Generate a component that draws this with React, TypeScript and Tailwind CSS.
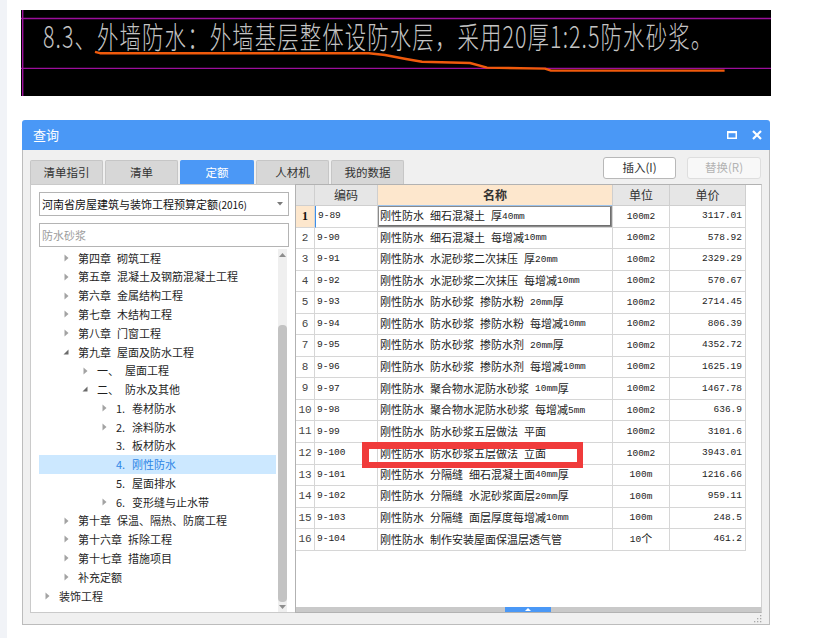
import React from "react";

const CJK = "font-['Noto_Sans_CJK_SC','Noto_Sans',sans-serif]";
const MONO = "font-['Liberation_Mono','DejaVu_Sans_Mono',monospace]";

function Sp({ t }: { t: string }) {
  const parts = t.split(" ");
  return (
    <>
      {parts.map((p, i) => (
        <React.Fragment key={i}>
          {i > 0 && <span className="inline-block w-[6px]" />}
          {p}
        </React.Fragment>
      ))}
    </>
  );
}

function NameText({ t }: { t: string }) {
  const runs = t.split(/([A-Za-z0-9.]+)/).filter((s) => s.length > 0);
  return (
    <>
      {runs.map((r, i) =>
        /^[A-Za-z0-9.]+$/.test(r) ? (
          <span key={i} className={`${MONO} text-[9.5px] relative -top-[1.5px]`}>
            {r}
          </span>
        ) : (
          <Sp key={i} t={r} />
        )
      )}
    </>
  );
}

type TNode = {
  lvl: number;
  arrow: "r" | "d" | null;
  pre?: string;
  preW?: number;
  text: string;
  sel?: boolean;
};

const tree: TNode[] = [
  { lvl: 1, arrow: "r", text: "第四章 砌筑工程" },
  { lvl: 1, arrow: "r", text: "第五章 混凝土及钢筋混凝土工程" },
  { lvl: 1, arrow: "r", text: "第六章 金属结构工程" },
  { lvl: 1, arrow: "r", text: "第七章 木结构工程" },
  { lvl: 1, arrow: "r", text: "第八章 门窗工程" },
  { lvl: 1, arrow: "d", text: "第九章 屋面及防水工程" },
  { lvl: 2, arrow: "r", pre: "一、", preW: 28, text: "屋面工程" },
  { lvl: 2, arrow: "d", pre: "二、", preW: 28, text: "防水及其他" },
  { lvl: 3, arrow: "r", pre: "1.", preW: 16, text: "卷材防水" },
  { lvl: 3, arrow: "r", pre: "2.", preW: 16, text: "涂料防水" },
  { lvl: 3, arrow: null, pre: "3.", preW: 16, text: "板材防水" },
  { lvl: 3, arrow: null, pre: "4.", preW: 16, text: "刚性防水", sel: true },
  { lvl: 3, arrow: null, pre: "5.", preW: 16, text: "屋面排水" },
  { lvl: 3, arrow: "r", pre: "6.", preW: 16, text: "变形缝与止水带" },
  { lvl: 1, arrow: "r", text: "第十章 保温、隔热、防腐工程" },
  { lvl: 1, arrow: "r", text: "第十六章 拆除工程" },
  { lvl: 1, arrow: "r", text: "第十七章 措施项目" },
  { lvl: 1, arrow: "r", text: "补充定额" },
  { lvl: 0, arrow: "r", text: "装饰工程" },
];

const rows: [string, string, string, string][] = [
  ["9-89", "刚性防水 细石混凝土 厚40mm", "100m2", "3117.01"],
  ["9-90", "刚性防水 细石混凝土 每增减10mm", "100m2", "578.92"],
  ["9-91", "刚性防水 水泥砂浆二次抹压 厚20mm", "100m2", "2329.29"],
  ["9-92", "刚性防水 水泥砂浆二次抹压 每增减10mm", "100m2", "570.67"],
  ["9-93", "刚性防水 防水砂浆 掺防水粉 20mm厚", "100m2", "2714.45"],
  ["9-94", "刚性防水 防水砂浆 掺防水粉 每增减10mm", "100m2", "806.39"],
  ["9-95", "刚性防水 防水砂浆 掺防水剂 20mm厚", "100m2", "4352.72"],
  ["9-96", "刚性防水 防水砂浆 掺防水剂 每增减10mm", "100m2", "1625.19"],
  ["9-97", "刚性防水 聚合物水泥防水砂浆 10mm厚", "100m2", "1467.78"],
  ["9-98", "刚性防水 聚合物水泥防水砂浆 每增减5mm", "100m2", "636.9"],
  ["9-99", "刚性防水 防水砂浆五层做法 平面", "100m2", "3101.6"],
  ["9-100", "刚性防水 防水砂浆五层做法 立面", "100m2", "3943.01"],
  ["9-101", "刚性防水 分隔缝 细石混凝土面40mm厚", "100m", "1216.66"],
  ["9-102", "刚性防水 分隔缝 水泥砂浆面层20mm厚", "100m", "959.11"],
  ["9-103", "刚性防水 分隔缝 面层厚度每增减10mm", "100m", "248.5"],
  ["9-104", "刚性防水 制作安装屋面保温层透气管", "10个", "461.2"],
];

function ArrowR() {
  return (
    <svg width="5" height="8" viewBox="0 0 5 8">
      <path d="M0.5 0.5 L4.5 4 L0.5 7.5 Z" fill="#a3a3a3" />
    </svg>
  );
}
function ArrowD() {
  return (
    <svg width="6" height="6" viewBox="0 0 6 6">
      <path d="M5.5 0.5 L5.5 5.5 L0.5 5.5 Z" fill="#6b6b6b" />
    </svg>
  );
}

function Tab({ label, w, active }: { label: string; w: string; active?: boolean }) {
  return (
    <div
      className={`${w} h-[24px] flex items-center justify-center text-[11.5px] rounded-t-[2px] border border-b-0 ${
        active
          ? "bg-[#4b98f6] border-[#4b98f6] text-white"
          : "bg-[#d7d7d7] border-[#c6c6c6] text-[#333]"
      }`}
    >
      {label}
    </div>
  );
}

export default function App() {
  return (
    <div className={`w-[838px] h-[638px] bg-white flex overflow-hidden ${CJK}`}>
      <div className="w-[7px] shrink-0 bg-[#f1f3f7]" />
      <div className="flex flex-col">
        {/* CAD banner */}
        <div className="relative ml-[14px] mt-[10px] h-[86px] w-[750px] bg-black">
          <svg className="absolute left-0 top-0" width="750" height="86" viewBox="0 0 750 86">
            <line x1="0" y1="8.5" x2="750" y2="8.5" stroke="#9c0f9c" strokeWidth="1.4" />
            <line x1="0" y1="58.4" x2="750" y2="58.4" stroke="#9c0f9c" strokeWidth="1.4" />
            <line x1="1.7" y1="0" x2="1.7" y2="86" stroke="#9c0f9c" strokeWidth="1.4" />
            <polyline
              points="74,41.8 79,43.2 348,43.2 364,45 385,49 401,51.8 449,53 466,57.6 524,58.6 530,60.6 703.6,60.6"
              fill="none"
              stroke="#f05a0c"
              strokeWidth="2.4"
              strokeLinejoin="round"
            />
          </svg>
          <div className="relative pl-[22px] pt-[10px] whitespace-nowrap">
            <span className="inline-block origin-left scale-x-[0.715] text-[30px] leading-[30px] text-[#c4c4c4] font-light tracking-[1.5px]">
              8.3、外墙防水：外墙基层整体设防水层，采用20厚1:2.5防水砂浆。
            </span>
          </div>
        </div>

        {/* Dialog */}
        <div className="ml-[15px] mt-[24px] w-[748px] flex flex-col">
          <div className="h-[30px] bg-[#4a98f6] rounded-t-[3px] flex items-center pl-[11px] pr-[8px] text-white text-[13px]">
            <span>查询</span>
            <div className="ml-auto flex items-center gap-[15px]">
              <svg width="10" height="8" viewBox="0 0 10 8">
                <rect x="0.75" y="1" width="8.5" height="6.25" fill="none" stroke="white" strokeWidth="1.5" />
                <rect x="0" y="0" width="10" height="2.2" fill="white" />
              </svg>
              <svg width="10" height="10" viewBox="0 0 10 10">
                <path d="M1 1 L9 9 M9 1 L1 9" stroke="white" strokeWidth="2.2" />
              </svg>
            </div>
          </div>
          <div className="h-[475px] bg-[#f0f0f0] border-x border-b border-[#bcbcbc] px-[7px] pt-[10px] flex flex-col">
            {/* tabs row */}
            <div className="h-[24px] flex">
              <div className="flex gap-[2px]">
                <Tab label="清单指引" w="w-[73px]" />
                <Tab label="清单" w="w-[73px]" />
                <Tab label="定额" w="w-[74px]" active />
                <Tab label="人材机" w="w-[73px]" />
                <Tab label="我的数据" w="w-[73px]" />
              </div>
              <div className="ml-auto mr-[1px] -mt-[3px] flex gap-[11px]">
                <div className="w-[73px] h-[22px] bg-white border border-[#b8b8b8] rounded-[3px] flex items-center justify-center text-[11.5px] text-[#333]">
                  插入(I)
                </div>
                <div className="w-[74px] h-[22px] bg-[#f8f8f8] border border-[#dedede] rounded-[3px] flex items-center justify-center text-[11.5px] text-[#b3b3b3]">
                  替换(R)
                </div>
              </div>
            </div>

            {/* panels */}
            <div className="h-[429px] flex">
              {/* left panel */}
              <div className="w-[265px] bg-white border-y border-l border-[#cacaca] pl-[8px] pt-[7px] flex flex-col">
                <div className="w-[250px] h-[24px] border border-[#b4b4b4] flex items-center pl-[2px] pr-[5px] text-[11px] text-[#111]">
                  <span className="whitespace-nowrap">
                    河南省房屋建筑与装饰工程预算定额<span className="text-[10px]">(2016)</span>
                  </span>
                  <svg className="ml-auto" width="6" height="4" viewBox="0 0 6 4">
                    <path d="M0 0 L6 0 L3 3.5 Z" fill="#7a7a7a" />
                  </svg>
                </div>
                <div className="mt-[7px] w-[250px] h-[24px] border border-[#b4b4b4] flex items-center pl-[2px] text-[11px] text-[#9c9c9c]">
                  防水砂浆
                </div>
                <div className="mt-[1.6px] flex">
                  <div className="w-[237px] flex flex-col">
                    {tree.map((n, i) => (
                      <div
                        key={i}
                        className={`h-[18.78px] flex items-center text-[11px] whitespace-nowrap ${
                          n.sel ? "bg-[#cce8ff] text-[#2f86e6]" : "text-[#1f1f1f]"
                        }`}
                        style={{ paddingLeft: 2 + n.lvl * 19 }}
                      >
                        <div className="w-[12px] h-full flex items-center justify-center">
                          {n.arrow === "r" && <ArrowR />}
                          {n.arrow === "d" && <ArrowD />}
                        </div>
                        <div className="w-[6px]" />
                        {n.pre && (
                          <span className="inline-block" style={{ width: n.preW }}>
                            {n.pre}
                          </span>
                        )}
                        <span>
                          <Sp t={n.text} />
                        </span>
                      </div>
                    ))}
                  </div>
                  <div className="ml-[2px] w-[9px] h-[363px] bg-[#efefef] flex flex-col items-center">
                    <div className="h-[12px] flex items-center justify-center">
                      <svg width="7" height="4" viewBox="0 0 7 4">
                        <path d="M0 4 L7 4 L3.5 0 Z" fill="#8d8d8d" />
                      </svg>
                    </div>
                    <div className="mt-[64px] w-[9px] h-[277px] rounded-[4px] bg-[#c3c3c3]" />
                    <div className="flex-1 flex items-center justify-center">
                      <svg width="7" height="4" viewBox="0 0 7 4">
                        <path d="M0 0 L7 0 L3.5 4 Z" fill="#8d8d8d" />
                      </svg>
                    </div>
                  </div>
                </div>
              </div>

              {/* right panel */}
              <div className="relative w-[467px] bg-white border border-[#b2b2b2] border-r-[#d0d0d0] flex flex-col">
                <div className="flex flex-col">
                  {/* header */}
                  <div className="flex h-[21px] text-[12px] text-[#333]">
                    <div className="w-[19px] bg-[#e6e6e6] border-r border-b border-[#cfcfcf]" />
                    <div className="w-[63px] bg-[#e6e6e6] border-r border-b border-[#cfcfcf] flex items-center justify-center">编码</div>
                    <div className="w-[235px] bg-[#fde7cd] border-r border-b border-[#cfcfcf] border-b-[#9cc3ec] flex items-center justify-center font-bold">名称</div>
                    <div className="w-[57px] bg-[#e6e6e6] border-r border-b border-[#cfcfcf] flex items-center justify-center">单位</div>
                    <div className="w-[76px] bg-[#e6e6e6] border-r border-b border-[#cfcfcf] flex items-center justify-center">单价</div>
                  </div>
                  {rows.map((r, i) => (
                    <div key={i} className="flex h-[21.56px] text-[#222]">
                      <div
                        className={`w-[19px] border-r border-b border-[#d6d6d6] flex items-center justify-center ${
                          i === 0
                            ? "bg-[#fde7cd] font-['Liberation_Serif',serif] font-bold text-[12px] text-[#111]"
                            : `${MONO} text-[11px] text-[#444]`
                        }`}
                      >
                        {i + 1}
                      </div>
                      <div
                        className={`w-[63px] border-r border-b border-[#d6d6d6] flex items-center pl-[2px] ${MONO} text-[9.5px] ${
                          i === 0 ? "border-l border-l-[#3d8fe9]" : ""
                        }`}
                      >
                        {r[0]}
                      </div>
                      <div
                        className={`w-[235px] border-r border-b border-[#d6d6d6] flex items-center pl-[2px] text-[11px] whitespace-nowrap overflow-hidden ${
                          i === 0 ? "shadow-[inset_0_0_0_1px_#8a8a8a,inset_-1px_-1px_0_1px_#6f6f6f]" : ""
                        }`}
                      >
                        <span>
                          <NameText t={r[1]} />
                        </span>
                      </div>
                      <div className="w-[57px] border-r border-b border-[#d6d6d6] flex items-center justify-center text-[11px]">
                        <span>
                          <NameText t={r[2]} />
                        </span>
                      </div>
                      <div className={`w-[76px] border-r border-b border-[#d6d6d6] flex items-center justify-end pr-[3px] ${MONO} text-[9.5px]`}>
                        {r[3]}
                      </div>
                    </div>
                  ))}
                </div>
                <div className="flex-1" />
                <div className="h-[5px] bg-[#c9c9c9] flex">
                  <div className="ml-[209px] w-[46px] h-[5px] bg-[#4a98f6] flex items-center justify-center">
                    <svg width="6" height="3" viewBox="0 0 6 3">
                      <path d="M0 3 L6 3 L3 0 Z" fill="white" />
                    </svg>
                  </div>
                </div>
                {/* red annotation box */}
                <div className="absolute left-[66px] top-[257px] w-[221px] h-[26px] border-[6px] border-l-[7px] border-t-[7px] border-[#f03b3b]" />
              </div>
            </div>
            <div className="h-[11px] flex justify-end items-end">
              <svg width="8" height="8" viewBox="0 0 8 8" className="mb-[1px]">
                <rect x="6" y="0" width="1.3" height="1.3" fill="#a8a8a8" />
                <rect x="3" y="3" width="1.3" height="1.3" fill="#a8a8a8" />
                <rect x="6" y="3" width="1.3" height="1.3" fill="#a8a8a8" />
                <rect x="0" y="6" width="1.3" height="1.3" fill="#a8a8a8" />
                <rect x="3" y="6" width="1.3" height="1.3" fill="#a8a8a8" />
                <rect x="6" y="6" width="1.3" height="1.3" fill="#a8a8a8" />
              </svg>
            </div>
          </div>
        </div>
      </div>
    </div>
  );
}
